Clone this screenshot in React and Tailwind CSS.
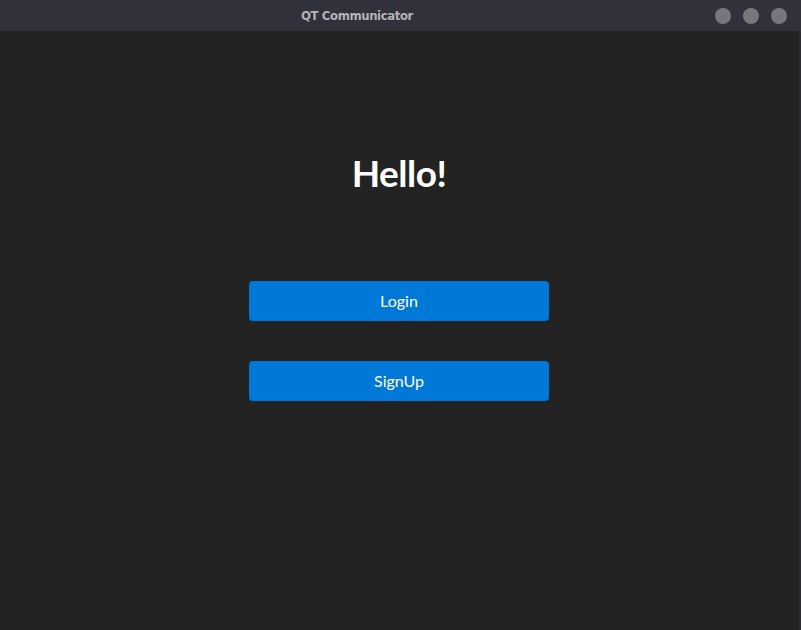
export default function App() {
  return (
    <div className="w-[801px] h-[630px] flex flex-col bg-[#232323]" style={{ fontFamily: "Lato, 'Open Sans', sans-serif" }}>
      <div className="h-[31px] bg-[#30313b] flex items-center shrink-0">
        <div className="w-[714px] flex justify-center">
          <span className="text-[13px] font-bold text-[#b3b3b8] tracking-[-0.4px]" style={{ fontFamily: "'DejaVu Sans Condensed', 'DejaVu Sans', sans-serif", fontStretch: "condensed" }}>QT Communicator</span>
        </div>
        <div className="flex gap-[12px] ml-[1px]">
          <div className="w-[16px] h-[16px] rounded-full bg-[#77777b]" />
          <div className="w-[16px] h-[16px] rounded-full bg-[#77777b]" />
          <div className="w-[16px] h-[16px] rounded-full bg-[#77777b]" />
        </div>
      </div>
      <div className="flex flex-1">
        <div className="flex-1 flex flex-col items-center">
          <h1 className="mt-[120px] text-[37px] leading-[44px] font-bold text-white tracking-[-0.5px]">Hello!</h1>
          <button className="mt-[86px] w-[300px] h-[40px] rounded-[4px] bg-[#0078d7] text-white text-[16px]">Login</button>
          <button className="mt-[40px] w-[300px] h-[40px] rounded-[4px] bg-[#0078d7] text-white text-[16px]">SignUp</button>
        </div>
        <div className="w-[1px] bg-[#232323]" />
        <div className="w-[2px] bg-[#2c2c31]" />
      </div>
    </div>
  );
}
